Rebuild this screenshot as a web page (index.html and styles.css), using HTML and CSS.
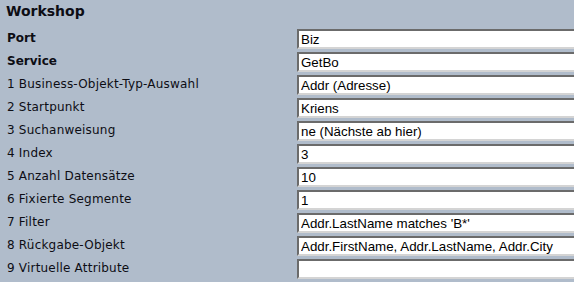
FILE: index.html
```html
<!DOCTYPE html>
<html>
<head>
<meta charset="utf-8">
<link rel="stylesheet" href="styles.css">
</head>
<body>
<div class="page">
  <h1 class="title">Workshop</h1>
  <div class="form">
    <div class="row"><div class="label strong">Port</div><div class="field"><input class="box" value="Biz"></div></div>
    <div class="row"><div class="label strong">Service</div><div class="field"><input class="box" value="GetBo"></div></div>
    <div class="row"><div class="label">1 Business-Objekt-Typ-Auswahl</div><div class="field"><input class="box" value="Addr (Adresse)"></div></div>
    <div class="row"><div class="label">2 Startpunkt</div><div class="field"><input class="box" value="Kriens"></div></div>
    <div class="row"><div class="label">3 Suchanweisung</div><div class="field"><input class="box" value="ne (Nächste ab hier)"></div></div>
    <div class="row"><div class="label">4 Index</div><div class="field"><input class="box" value="3"></div></div>
    <div class="row"><div class="label">5 Anzahl Datensätze</div><div class="field"><input class="box" value="10"></div></div>
    <div class="row"><div class="label">6 Fixierte Segmente</div><div class="field"><input class="box" value="1"></div></div>
    <div class="row"><div class="label">7 Filter</div><div class="field"><input class="box" value="Addr.LastName matches 'B*'"></div></div>
    <div class="row"><div class="label">8 Rückgabe-Objekt</div><div class="field"><input class="box" value="Addr.FirstName, Addr.LastName, Addr.City"></div></div>
    <div class="row"><div class="label">9 Virtuelle Attribute</div><div class="field"><input class="box" value=""></div></div>
  </div>
</div>
</body>
</html>
```

FILE: styles.css
```css
html, body {
  margin: 0;
  padding: 0;
  background: #b0bccb;
  overflow: hidden;
}
.page {
  width: 574px;
  height: 282px;
  overflow: hidden;
  font-family: "DejaVu Sans", Verdana, sans-serif;
  color: #0d0d14;
}
.title {
  margin: 0;
  padding: 2px 0 0 6px;
  height: 27px;
  box-sizing: border-box;
  font-size: 14px;
  font-weight: bold;
  line-height: 18px;
}
.form {
  display: flex;
  flex-direction: column;
  padding-top: 2px;
}
.row {
  display: grid;
  grid-template-columns: 297px 320px;
  height: 23px;
}
.label {
  padding-left: 7px;
  font-size: 12px;
  line-height: 16px;
  padding-top: 1px;
  letter-spacing: 0.2px;
  white-space: nowrap;
}
.strong {
  font-weight: bold;
  letter-spacing: 0;
}
.field {
  display: flex;
}
.box {
  margin: 0;
  width: 320px;
  height: 20px;
  box-sizing: border-box;
  padding: 0 0 0 2px;
  border-style: solid;
  border-width: 2px;
  border-color: #6b6b6b #d4d4d4 #d4d4d4 #6b6b6b;
  background: #fff;
  font-family: "Liberation Sans", Arial, sans-serif;
  font-size: 13.333px;
  color: #000;
  outline: none;
}
```
